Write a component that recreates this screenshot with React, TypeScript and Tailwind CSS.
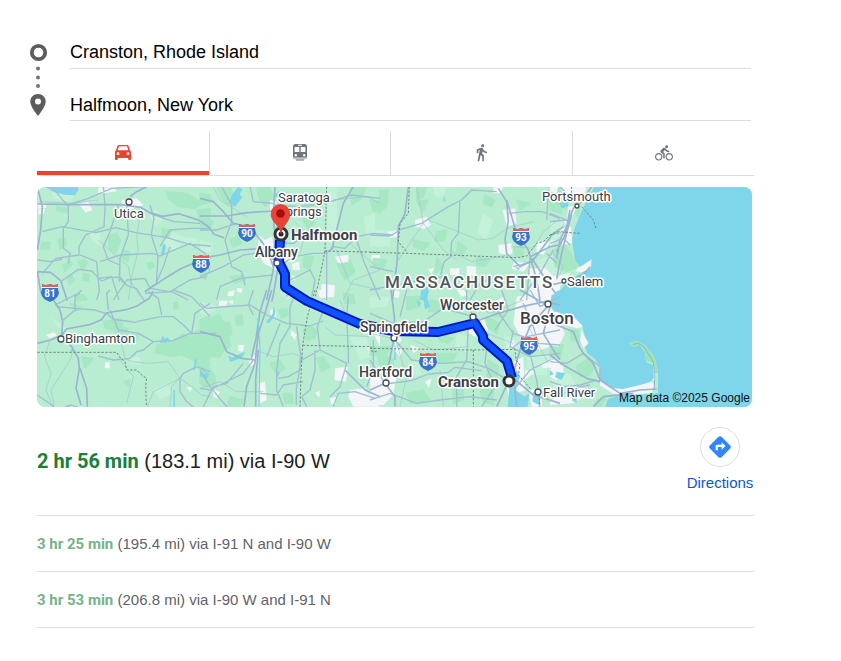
import { MdDirections, MdDirectionsBike, MdDirectionsWalk } from "react-icons/md";

function CarIcon({ size }: { size: number }) {
  return (
    <svg viewBox="0 0 16 15" width={size} fill="currentColor" aria-hidden="true">
      <path
        fillRule="evenodd"
        d="M4 0h8q1.300 0 1.700 1.200L15 5.200l1 1.300V14q0 1-1 1h-.8q-1 0-1-1v-1H2.800v1q0 1-1 1H1q-1 0-1-1V6.500l1-1.300 1.300-4Q2.700 0 4 0ZM4 1.300L2.700 5.200h10.600L12 1.300ZM3 7.300a1.400 1.400 0 1 0 0 2.800a1.400 1.400 0 0 0 0-2.800ZM13 7.300a1.400 1.400 0 1 0 0 2.800a1.400 1.400 0 0 0 0-2.800Z"
      />
    </svg>
  );
}

function TrainIcon({ size }: { size: number }) {
  return (
    <svg viewBox="0 0 14 17" width={size} fill="currentColor" aria-hidden="true">
      <path
        fillRule="evenodd"
        d="M2.500 0h9Q14 0 14 2.500V13.500H0V2.500Q0 0 2.500 0ZM5 .8v1h4v-1ZM1.600 3v5h4.700V3ZM7.700 3v5h4.700V3ZM2.800 10a1.200 1.200 0 1 0 0 2.400a1.200 1.200 0 0 0 0-2.400ZM11.200 10a1.200 1.200 0 1 0 0 2.400a1.200 1.200 0 0 0 0-2.400Z"
      />
      <path d="M0 13.500h14q0 2-2 2H2q-2 0-2-2Z" opacity=".45" />
      <path d="M3 15.500h8v1H3z" />
    </svg>
  );
}

const modes = [
  { name: "Driving", Icon: CarIcon, size: 16, active: true },
  { name: "Transit", Icon: TrainIcon, size: 14, active: false },
  { name: "Walking", Icon: MdDirectionsWalk, size: 19, active: false },
  { name: "Cycling", Icon: MdDirectionsBike, size: 18, active: false },
];

const alternatives = [
  { time: "3 hr 25 min", detail: "(195.4 mi) via I-91 N and I-90 W" },
  { time: "3 hr 53 min", detail: "(206.8 mi) via I-90 W and I-91 N" },
];

// The map is drawn in tiles, three units to the pixel
const tiles = [
  {
    x: 30, y: 180,
    forest: "M235 170l25-12 12 25-15 35-18-10z M85 180l20-5 5 20-20 12z M35 190l25-4 -2 20-25 2z M100 255l20-10 5 10-20 20z M145 245l20-8 8 12-18 22z M110 290l15-5 8 15-15 15z M160 280l18 5-2 18-18-2z M410 35l60 5 50 30-25 15-50-5-30-25z M500 90l40-5v50l-25 5z M80 80l35 5-5 12-30-5z M395 145l30 5-10 25-18-5z M280 210l20 5-5 30-20-10z M350 250l15-5 8 15-15 10z",
    pale: "M405 150l60 20-20 40-50-10z M170 150l40 10 5 40-25-15z M60 20h90l-30 45-50-10z M350 95l30-5 20 30-25 20z M440 170l60 5 10 15-50 5z",
    town: "M145 70l30-5 12 25-20 8z M205 22h50l5 12-55 8z M275 60l45-5 20 20-35 12-25-5z M22 72l25-2 2 14-25 2z M25 88l20-2-3 15-17 3z",
    lake: "M45 20h100v10l-10 16-30-2-35-8z M400 190l8 8-5 22-12 12z",
    major: "M22 72l110 2h140l60 8 25 15 40 12 50-8 60 20 30 20 15 22 30 10 M22 275l40 2 30 25 20 60 M22 20l15 60-5 70-10 60 M22 275l10 60 15 25 M300 50l20-15 30-15 M345 335l60-40 50-30 60-25",
    roads: "M65 20l50 60 0 45-15 20 0 60 20 15-5 30 M115 75l60-20 70-30 110-5 M37 155l60-15 100 18 60-15 60 15 95 15 65 20 65 5 M220 20l5 60-3 60-55 25-20 35 0 25-70 10-40 45 M265 75l-25 80-20 45 15 40 35 15-2 50 M290 65l5 100-25 70-2 60 20 20 M360 75l12 40-8 50 20 65-5 80-35 25 M150 225l50 20 8 90-8 25 M210 245l60-20 100-5 20 8 90-38 45 30 15 60 M95 303l50-35 40 5 30 30 25-10 30-2 20 25 30 10 25 40 M22 240l40 5 35-8 M205 295l40-5 22 70 M250 360l40-60 55-5 15 30 60 10 60-35 50-10 M345 340l80-5 50 25 M420 200l-20 60-20 45 M360 100l70 25 80 5 M540 145h-60l-60 5-30 50",
    minor: "M335 80l-15 90 5 40-20 80-10 70 M30 65l95 5 80-10 M205 180l90 80 10 55 M300 300l30 50",
    border: "",
  },
  {
    x: 30, y: 290,
    forest: "M220 95l50-10 10 20-20 20-35-10z M255 105l40 10-15 20-25-5z M285 130l40 5-5 18-40-5z M380 165l40-15 20 8 45-22 55 20v50l-25 -4-20 12-40-20-30 6-50-12z M430 150l30-18 18 4 32-16 30 10v15l-60 5z M500 215l35-5 5 20-35 5z M130 15l30-2 12 15-30 5z M155 200l35 5-25 30z M280 275l20-5-3 20z M120 40l35 10-10 12z M430 40l12-4 4 18-14 4z",
    pale: "M300 200l25 0 10 25-35-4z M60 80l60 40-20 10z M370 300l40-20 20 30-40 20z",
    town: "M48 135l25-8 8 10-22 8z M225 217h14v18h-14z M470 290l17 3-7 12z",
    lake: "M390 158l8-22 6 10 10-4 4 10-15 6z M490 240l5-35 5 5-5 30z M430 300l5 0 0 50h-5z M130 50l12 10-5 5z M500 225l40 30-8 0z M120 185l5-10 12 8z",
    major: "M50 0l20 30 20 30 8 35-3 45 30 30 20 35 3 30-10 60 15 50 M150 235l20 60 2 55 M22 160l40-10 35-15 12-18 70-13 35-15 15-20 60-10 30-10 40-25 10-20",
    roads: "M75 45l60-30 15-5 M80 50l55 5 60 5 30 10 M100 90l35-30 0-40 20-20 M240 60l25 60 60 10 45 25 60-3 50-22 80 0 M320 98l-30-5-40-5 -20-18 M320 95l70-15 40 0 30 25 25 25 M395 75l-10-50-30-20 M485 130l10-60 45-30 M430 0l55 20 55 60 M370 155l-30 25-20 5-20 20-50 5-45-12 M235 60l-5-50 10-10 M450 265l10-15 40-20 40 15 M450 265l0 40 20 30 20 15 M22 315l50 35 M105 350l20-5 20 8",
    minor: "M58 155l-15 45 20 50-15 50 20 50 M265 120l20 85 20 10 50 5 60-5 35 50-80 40-20 50 M270 210l40 50-20 80 M128 175l-5 30-60 95 10 50 M420 350l5-60 22-25 M450 265l35 25 30 25 25 5",
    border: "M22 187H260l12 18 13 10 5 25h30l15 15 15 10-3 20 2 60",
  },
  {
    x: 200, y: 180,
    forest: "M50 20l40 0 15 40-20 15-20-20z M0 40l30 5 6 20-36 10z M170 20h40l10 40-25 20-20-30z M310 60l30 10 5 60-20 20-20-40z M0 110l40 15-10 20-30-10z M450 20h50l-20 40-25 15z M410 250l40-10 15 35-30 25z M90 180l20-12 15 20-25 15z M310 230l30 0-10 40-20-10z M510 60l30 5v25l-20 5z M90 290l40-5 5 15-30 10z M285 150l20 0 10 20-25-3z M5 260l18 20-5 20-15-10z",
    pale: "M380 20l30 0 5 160-20 15-15-10z M0 180l40 10-10 30-30-5z M490 110l35-10 0 50-25 20z M250 310l30 20-15 30-25-20z",
    town: "M175 165l20 15 20-10 15 60 0 40-40-20-15-30z M250 215l25-5 3 35-25 0z M405 230l40-6 0 22-30 4z M365 312l40 4-3 36-40-2z M275 250l22-5 3 25-22 0z M85 335l20-5 -5 18-18 0z M210 60l20 5-5 50-15-10z M110 325l18 0-4 14-12-3z M515 225l25 0v22l-25-6z M275 285l12 5-5 12z",
    lake: "M115 20l12 8-8 16 8 8-22 28-18-12 10-25z M222 45l15-12 4 5-10 15z M175 175l15 10-6 6z",
    major: "M0 55l40 10 30 30 30 35 40 10 30 25 30 40 20 55 M0 108l80 0 60-10 80-5 M0 235l60-10 60-15 70-5 40 45 M225 20l-5 90 5 60-5 100-20 90 M235 255l-15 90-5 20 M460 20l-30 50-20 80-15 60",
    roads: "M0 150l50 0 60-20 M65 20l30 55 0 50-20 55 20 80 30 15 10 40 M150 20l10 45 60 5 M0 290l70-30 60-35 70-10 M50 360l10-40 60-25 50-5 50-5 M220 75l80 5 75-10 80-25 85 10 M230 140l30 50 20 0 50-35 45 5 M250 250l30-20 60-10 40 0 20-20 35 5 35-35 50-10 60 5 M260 350l10-50 60-30 15 30-10 50 M380 210l0 150 M470 180l20 60 50 120",
    minor: "M280 120l35 40-15 60 M400 60l100-10 40 20 M410 210l40 100 90 20 M40 20l20 40 80 50 M450 190l90 80 M430 360l30-60 80-30",
    border: "M380 20l-2 90-3 103 165 4 M375 213l-12 60-18 82",
  },
  {
    x: 200, y: 290,
    forest: "M0 90l20-10 16 6 20-14 14 24 18 2 8 30-10 16 6 24-20 14-14 20-22-4-16 14-20-6z M105 80l20-8 5 30-20 5z M0 230l30 6 14 20 4 24-26 14-22-14z M310 120l20-12 20 12-5 25-25 5z M235 60l25-5 5 20-20 10z M210 220l30-10 15 25-25 20z M430 10l30 5 5 25-30 0z M350 205l20-5 20 30-25 15z M90 320l40 10-10 20-40 0z M250 310l25 0 5 30-25 0z M430 85l30 0 10 15-25 5z",
    pale: "M0 40l40 0 10 20-30 14-20-5z M450 140l50 0 10 60-30 10z",
    town: "M58 32l25 0-5 15-22 0z M85 32l15 0-2 12z M115 165l18 0-4 20-15-3z M150 200l18-5 3 30-25 3z M275 120l15 15-5 15-13-15z M405 235l38-5-5 45-35-5z M345 308l15-5-2 20z M390 325l18-4 0 22-15 0z M450 300l40-5 30 30 20 25h-80l-15-30z M175 280l20-5 5 55-20 10z M210 60l15-5 5 25-17 5z M350 0l50 0 0 20-40 5z M40 300l20 5-10 20-10-5z M500 170l40 5v20l-30 0z M520 130l20-10v50z",
    lake: "M85 195l10 8 40-18-10 20-35 10z M0 245l25 12-5 10-20-10z M220 50l6 10-2 18-18 22-8-4 20-25z M230 250l10-5-8 20z",
    major: "M215 0l-20 70-20 60-10 90-25 70-8 60 M200 0l-20 65-12 80-15 65 M175 180l-8 90 0 80 M0 125l60 15 20 45 45 20 40 5 M435 240l60 60 45 20",
    roads: "M0 40l20 15 60-5 70-5 50 30 60 25 70 8 40-15 M160 0l-15 45 15 30 M240 100l-20 50-20 50 M290 0l-20 50 0 60-30 50-10 80 0 60 20 50 M290 110l8 60 6 35-15 90 0 50 M370 60l-18 50 8 70-55 30 M360 180l80 40-20 70-30 30 M445 20l-5 60 5 100 0 40 M300 205l0 35-35 20-30 5 M345 180l0 60-15 60-25 20 M0 295l30 5 60-30 40-20 30-40 M130 220l-50 60 -40 10-30 60 M0 240l30 50 50 60 M180 310l50 5 20-30 60-10 M400 350l15-40 50-5 60 20 M305 320l15 30 M520 150l0 90-20 50",
    minor: "M180 185l40 15 60-10 25 12 M0 295l60-20 50 30 80 0 M420 30l20 50 50 20 M375 110l30 25 110 5",
    border: "M345 0l-8 30-15 50-14 85-5 90-3 95 M308 166l205 4 3 15 14 0",
  },
  {
    x: 370, y: 180,
    forest: "M30 30l25 0-5 50-25 20z M140 20l30 0-10 30-20 10z M200 155l30-5-5 30-30 5z M130 180l50 10-20 20-30-10z M345 45l30 15-10 20-25-10z M540 20h30v40l-15-5z M440 60l40 10-30 20z M10 235l40 5-10 25-30-5z M265 185l25 20-15 20-15-10z M430 200l30 0 0 30-25-3z M320 230l40 10-15 20-25-5z M140 65l35-5-15 35z M200 230l20 30-25 20z",
    pale: "M190 20l40 0-10 30-25 0z M0 150l60 0 0 50-60 0z M340 100l30 20-20 60-30-20z M500 240l70-20v100l-60-10z",
    town: "M135 120l35-10 12 25-20 12-27-8z M55 155l25-5 3 20-25 5z M370 22l30-2-10 20-20 0z M398 90l38-5 3 45-28 10z M385 195l40-5-5 35-33-5z M500 185l40 0-20 40-20-8z M430 245l50 5-20 25-35-8z M290 258l28 2 0 28-28-3z M175 268l18-5-10 20z M240 265l30 0-5 20-25 0z M475 265l50 0 45 40v55h-100l15-50z M450 150l33 0-10 15-20-4z M540 180l15 0-15 25z M405 215l22-10 0 18z M75 330l15 5-5 20-15-5z",
    lake: "M222 45l5 20-7-3z M155 320l20 0-5 40h-20z M558 335l12-5v30h-15z M435 260l15 5-5 6z",
    major: "M115 20l-10 80-20 40-3 100-15 120 M385 25l25 40 5 60-10 50 5 45 40 40 40-20 60-80 30-20 M410 60l30 100 35 50 25 90 10 60 M480 230l60-30 30-5 M485 235l40 60 45 65",
    roads: "M85 150l70-20 80-50 40-20 30-30 75 5 M0 165l60 3 25-15 M270 60l-5 100-20 25-3 45-20 15-10 40 M415 100l50-5 50 0 55 20 M530 120l5-90 M0 260l70 15 M0 330l100-20 120-20 M430 260l60-15 M530 220l30 30 M450 360l60-80 40-70 M300 360l30-50 20-10 M480 235l-10 125",
    minor: "M160 130l-75 110 M160 130l60 80 40 30 M160 130l-20-110 M175 120l90 35 60 25 45-5 40-30 80-20 M245 215l60 30 110-20 M430 200l60 5 30-50 50-40",
    border: "M118 20l-3 80-25 30-5 55 27 33 M0 217l112 3 200 8 130 5 28-5 30-38 20-5 20-20 32-8",
  },
  {
    x: 370, y: 290,
    forest: "M110 20l40 0 0 30-40 10z M180 30l30 5-5 30-30 0z M20 190l50 15 0 30-40-10z M110 310l50-10 20 30-60 10z M200 190l60 0-15 30-40 0z M355 210l30 20-5 50-30-10z M350 80l40 20-10 30-30-20z M330 300l40 0 0 45-30-10z M250 300l30 0 0 30-30 10z M210 130l40 15-15 15-30-8z M370 60l25 0 5 20-30 0z M0 170l60 0-10 25-50 0z",
    pale: "M120 220l25-15 10 50-30 5z M260 130l35 10-5 50-35-20z M400 140l60 0-10 50-40-10z M470 200l70-5-10 60-60 0z M0 20l60 0-10 30-50 5z",
    town: "M50 100l40-5 25 20-30 30-30-5z M285 95l55-10 15 35-40 20-25-15z M260 0l20 0 15 15-20 5z M440 20l100-20 30 30v130l-60 20-50-20-30-60z M400 230l60-30 5 100-50 20z M0 265l80-10-10 60-30 30H0z M475 300l40-5 0 55h-30z M375 35l25-15 0 25z M410 170l20-20 10 20z M65 170l35 5-10 25z M510 220l60-15v25l-50 5z M70 110l25 40-20 20z M165 275l20-10-8 30z M465 240l30 5-30 25z M170 120l10 20-15 0z M320 45l30-5 10 10-20 15z M120 165l30 10-20 15z M430 80l40-20 10 20-20 20z",
    lake: "M155 0l22 0-5 25 8 25-15 8-5-28z M545 15l25-10v60l-18 0-12-20z M440 240l10 20-12 40 25 20 15-10-5 40-60 2 5-60z M490 305l22 10-5 30-20-10z M75 150l3 60-6 0z M540 240l12 12-12 5z M140 30l12 10-5 12z",
    major: "M0 300l45-20 20-100 8-40 0-60-10-80 M45 280l30 40 0 30 M315 95l70-25 70-20 70-15 45 10 M540 40l-60 70-30 70-20 70 10 100 M540 50l-20 80 30 50 20 30 M430 265l60 50 80 25 M450 0l90 50 M420 265l-40 85",
    roads: "M45 282l80-10 50-20 60-5 20-15 80 10 M0 70l70 30 90-5 60-40 90 25 M90 80l20-80 M75 150l50 60 90 10 80-5 60 20 50 30 M295 100l-5 110-30 50 0 90 M355 130l-10 90 30 70 -40 60 M310 80l-20-40 0-40 M45 280l-45-70 M0 330l60-20 80 30 70-10 90-10 80 10 M430 120l-10 50 60 30 90-10 M380 60l50 70 60 20 M480 190l20 80 10 80 M540 210l-60 30-40 50 M395 0l20 60-40 60 M570 120l-100 20-50 40 M460 40l30 70 15 50 65 5 M480 0l30 50 60-30",
    minor: "M80 160l30 100-20 90 M130 150l60 30 100-10 M350 130l80 30 M210 240l10 110 M0 130l70 15 M300 40l60 30 100-40 M465 90l70 130",
    border: "M0 175l310 5 125-2 3 32 12 15-5 30 40 45 M310 180v170 M508 300v50",
  },
  {
    x: 550, y: 180,
    forest: "M10 210l35-15 25 40 15 25-35 15-35-15z M0 55l40 15-5 30-35-10z M75 100l15-15-5 25z",
    pale: "M0 130l40-10-10 50-30 15z",
    town: "M30 20l80 0-10 40-45 5z M35 145l28-5 3 50-30 5z M85 262l38-25-2 30-25 10-20-3z M0 290l60-10-30 40-30 15z M55 80l25-5-10 30-20 15z M40 120l20-5-8 30z M0 20l25 0-5 20-20-5z",
    lake: "M30 70l25-5 0 15-20 4z",
    major: "M65 100l-15 60-15 60-15 75 M125 20l-30 45-25 20-20 55-20 40-10 55 M0 315l50-10 50-20 20-25 M60 90l-15 75 -25 50",
    roads: "M0 100l60 25 M0 190l40-15 20 20 M0 125l50-5 M30 20l50 50",
    minor: "M10 220l30 40-20 40 M0 50l50 40",
    border: "M0 165l25-10 65 5 M65 20v20 M95 80l35 40 8 25",
  },
  {
    x: 550, y: 290,
    forest: "M80 230l35-25 20 25-15 25-30 5z M0 160l40 5-10 40-30-10z M60 120l25 0 10 40-30-10z M140 330l30-15-15 35h-20z",
    pale: "M0 260l60-10 20 40-60 30z",
    town: "M0 20l20-20 0 50 60 25 20 35-20 5-50-15-20-20z M95 120l20 40-15 15-10-25z M150 272l40 22 45-2 65-18 15 10-10 25-60 5-55-3-40-25z M0 100l25-10 20 40-20 40-25-5z M0 230l40-5 0 25-20 20-20-10z M310 220l8 0-2 50-8 0z M80 290l25-5 15 20-30 5z M0 325l100-5-30 20-70 5z",
    lake: "M20 245l25 5-10 20-20-8z M65 320l15-2 0 20-12-5z",
    major: "M20 105l50 20 20 50 10 15 30 30 20 50 60 40 60-10 50-3 M0 195l40 30 70 40 40 10 M130 350l30-30 90-10",
    roads: "M0 215l50 5 50-30 M40 290l50-5 50-15 M0 275l60 20 60-10 M100 190l50 40 0 40",
    minor: "M0 330l80-40 40 5",
    border: "",
  },
];

const shields = [
  { n: "81", x: 50, y: 293 },
  { n: "88", x: 201, y: 264 },
  { n: "90", x: 247, y: 233 },
  { n: "93", x: 521, y: 237 },
  { n: "84", x: 428, y: 362 },
  { n: "95", x: 529, y: 346 },
];

const places = [
  { name: "Utica", x: 114, y: 218, size: 13, weight: 400 },
  { name: "Saratoga", x: 278, y: 202, size: 13, weight: 400 },
  { name: "Springs", x: 278, y: 216, size: 13, weight: 400 },
  { name: "Albany", x: 255, y: 257, size: 14, weight: 500 },
  { name: "Portsmouth", x: 542, y: 201, size: 13, weight: 400 },
  { name: "Salem", x: 567, y: 286, size: 13, weight: 400 },
  { name: "Binghamton", x: 65, y: 343, size: 13, weight: 400 },
  { name: "Worcester", x: 440, y: 310, size: 14, weight: 500 },
  { name: "Springfield", x: 360, y: 332, size: 14, weight: 500 },
  { name: "Hartford", x: 359, y: 377, size: 14, weight: 500 },
  { name: "Fall River", x: 543, y: 397, size: 13, weight: 400 },
  { name: "Boston", x: 520, y: 324, size: 17, weight: 500 },
  { name: "Halfmoon", x: 291, y: 240, size: 15, weight: 700 },
  { name: "Cranston", x: 438, y: 387, size: 15, weight: 700 },
];

const towns = [
  [129, 202, 3], [61, 339, 3], [277, 263, 3], [394, 338, 3], [386, 383, 3],
  [473, 317, 3], [548, 304, 3], [577, 206, 2], [564, 281, 2], [538, 392, 3],
];

const route = "M280 240L279 262L285 274V287L307 301L360 324L393 331L438 332L475 323L483 336V340L507 361L512 378";

function RouteMap() {
  return (
    <svg
      viewBox="37 187 715 220"
      preserveAspectRatio="xMidYMid slice"
      role="img"
      aria-label="Driving route from Cranston to Halfmoon"
      className="block h-[220px] w-full"
      fontFamily="Roboto, sans-serif"
    >
      <rect x="37" y="187" width="715" height="220" fill="#b8edd1" />
      {tiles.map((t) => (
        <g key={`${t.x}-${t.y}`} transform={`translate(${t.x} ${t.y}) scale(.33333)`} strokeLinejoin="round">
          <path d={t.pale} fill="#c3f1da" />
          <path d={t.forest} fill="#a6e7c4" stroke="#a6e7c4" strokeWidth="4" />
          <path d={t.town} fill="#f3f5f8" />
        </g>
      ))}

      {/* ocean and the cape */}
      <path
        d="M594 187L583 208L575 227L572 240L575 260L580 267L592 259L591 268L583 272L570 280L557 293L556 300L553 306L557 312L575 318L582 325L585 337L589 343L585 347L587 353L595 359L600 367L599 380L613 388L623 389L640 385L650 382L654 378L653 365L646 362L645 352L640 345L633 347L629 343L637 341L645 345L652 353L656 362L658 373L658 387L658 393L650 394L620 395L608 399L605 407H752V187Z"
        fill="#7fd6ea"
      />
      <path d="M629 343L637 341L645 345L652 353L656 362L658 373L655 373L653 363L646 361L645 351L640 345L633 347Z" fill="#9be3bb" />
      <path d="M633 345Q638 341 644 347L653 361L655 376L654 389" fill="none" stroke="#98b0ca" strokeWidth="1" />

      {tiles.map((t) => (
        <g
          key={`${t.x}-${t.y}`}
          transform={`translate(${t.x} ${t.y}) scale(.33333)`}
          fill="none"
          strokeLinejoin="round"
        >
          <path d={t.lake} fill="#7fd6ea" />
          <path d={t.minor} stroke="#a3c3d0" strokeWidth="2" />
          <path d={t.roads} stroke="#a0bfd2" strokeWidth="4" />
          <path d={t.major} stroke="#9bb4d1" strokeWidth="5" />
          <path d={t.border} stroke="#6d8a7f" strokeWidth="3" strokeDasharray="7 5" />
        </g>
      ))}
      <path d="M258 318L260 350L259 407" fill="none" stroke="#72d0e6" strokeWidth="1" />

      <g fill="none" strokeLinejoin="round">
        <path d={route} stroke="#0516bb" strokeWidth="10" />
        <path d={route} stroke="#0f53ff" strokeWidth="6" />
      </g>

      {shields.map((s) => (
        <g key={s.n} transform={`translate(${s.x} ${s.y})`}>
          <path
            d="M-8-9Q-4-7 0-9Q4-7 8-9L8-5Q8-3 9 0Q8 6 0 9Q-8 6-9 0Q-8-3-8-5Z"
            fill="#3873c9"
          />
          <path d="M-8-9Q-4-7 0-9Q4-7 8-9V-6H-8Z" fill="#e0605c" />
          <path d="M-8-5.500H8" stroke="#fff" strokeWidth="1" />
          <text y="4" textAnchor="middle" fontSize="10" fontWeight="700" fill="#fff">{s.n}</text>
        </g>
      ))}

      {towns.map(([x, y, r]) => (
        <circle key={`${x}-${y}`} cx={x} cy={y} r={r} fill="#fff" stroke="#4a4f53" strokeWidth="1.3" />
      ))}

      <g fill="#3c4043" stroke="#fff" strokeWidth="3" strokeLinejoin="round" paintOrder="stroke">
        {places.map((p) => (
          <text key={p.name} x={p.x} y={p.y} fontSize={p.size} fontWeight={p.weight}>{p.name}</text>
        ))}
        <text x="385" y="288" fontSize="17" fontWeight="500" letterSpacing="2" fill="#50565a">MASSACHUSETTS</text>
      </g>

      <circle cx="509" cy="381" r="5" fill="#fff" stroke="#333" strokeWidth="3" />
      <circle cx="281" cy="234" r="6" fill="#fff" stroke="#333" strokeWidth="3" />
      <circle cx="281" cy="234" r="2.5" fill="#222" />
      <path
        d="M281 234C280 225 271 222 271 214A9.5 9.5 0 0 1 290 214C290 222 282 225 281 234Z"
        fill="#ea4335"
        stroke="#c5362b"
        strokeWidth=".6"
      />
      <circle cx="280.5" cy="213.500" r="4.300" fill="#a50e0e" />

      <text x="750" y="402" textAnchor="end" fontSize="12" fontFamily="'Liberation Sans', sans-serif" fill="#111">
        Map data ©2025 Google
      </text>
    </svg>
  );
}

export default function App() {
  return (
    <main className="w-full max-w-[754px] bg-white pt-9 font-['Liberation_Sans',Arial,sans-serif]">
      <form className="flex gap-[22px] pr-[3px] pl-[29px]">
        <svg viewBox="0 0 19 84" className="h-[84px] w-[19px] shrink-0" aria-hidden="true">
          <circle cx="9.500" cy="16.500" r="6.700" fill="none" stroke="#5c5c5c" strokeWidth="3.800" />
          <g fill="#70757a">
            <circle cx="9" cy="32.500" r="2" />
            <circle cx="9" cy="41.500" r="2" />
            <circle cx="9" cy="50" r="2" />
          </g>
          <path
            fillRule="evenodd"
            fill="#5c5c5c"
            d="M9 58C4.600 58 1.300 61.200 1.300 65.500C1.300 71 9 80 9 80S16.700 71 16.700 65.500C16.700 61.200 13.400 58 9 58ZM9 68.500A3 3 0 1 1 9 62.500A3 3 0 0 1 9 68.500Z"
          />
        </svg>
        <div className="flex-1">
          <input
            aria-label="Starting point"
            defaultValue="Cranston, Rhode Island"
            className="block h-[33px] w-full border-b border-[#dadce0] text-lg text-black outline-none"
          />
          <input
            aria-label="Destination"
            defaultValue="Halfmoon, New York"
            className="mt-5 block h-8 w-full border-b border-[#dadce0] pt-px text-lg text-black outline-none"
          />
        </div>
      </form>

      <div className="pl-[37px]">
        <div className="mt-[10px] grid h-[45px] grid-cols-[173fr_181fr_182fr_181fr] border-b border-[#dadce0]" role="tablist">
          {modes.map(({ name, Icon, size, active }) => (
            <button
              key={name}
              type="button"
              role="tab"
              aria-selected={active}
              aria-label={name}
              className={
                active
                  ? "relative flex items-center justify-center border-r border-[#dadce0] pb-px text-[#ea4335]"
                  : "flex items-center justify-center border-r border-[#dadce0] pb-px text-[#70757a] last:border-r-0"
              }
            >
              <Icon size={size} />
              {active && <span className="absolute inset-x-0 bottom-0 h-1 bg-[#ea4335]" />}
            </button>
          ))}
        </div>

        <a href="#map" className="mt-[11px] mr-[2px] block overflow-hidden rounded-lg">
          <RouteMap />
        </a>

        <section className="flex items-start justify-between border-b border-[#dadce0] pt-5 pb-[21px]">
          <p className="pt-5 text-xl leading-7 text-[#202124]">
            <span className="font-['Roboto',sans-serif] font-bold text-[#188038]">2 hr 56 min</span>{" "}
            (183.1 mi) via I-90 W
          </p>
          <a href="#directions" className="flex w-[68px] flex-col items-center gap-[5px] text-[15px] leading-[22px] text-[#0b57d0]">
            <span className="flex size-10 items-center justify-center rounded-full border border-[#dadce0]">
              <MdDirections size={26} className="text-[#2f86ff]" />
            </span>
            Directions
          </a>
        </section>

        {alternatives.map((r) => (
          <p key={r.time} className="h-14 border-b border-[#dadce0] text-[15px] leading-[56px] text-[#5f6368]">
            <span className="font-['Roboto',sans-serif] font-bold text-[#74b388]">{r.time}</span> {r.detail}
          </p>
        ))}
      </div>
    </main>
  );
}
